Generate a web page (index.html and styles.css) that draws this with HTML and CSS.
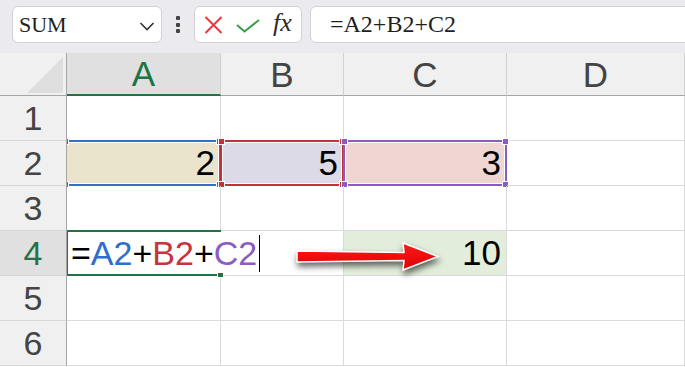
FILE: index.html
```html
<!DOCTYPE html>
<html>
<head>
<meta charset="utf-8">
<link rel="stylesheet" href="styles.css">
</head>
<body>
<div class="toolbar">
  <div class="namebox">
    <span class="name">SUM</span>
    <svg class="chev" width="16" height="10" viewBox="0 0 16 10"><path d="M1.5 2 L8 8.5 L14.5 2" fill="none" stroke="#333" stroke-width="1.6"/></svg>
  </div>
  <div class="grip"><i></i><i></i><i></i></div>
  <div class="fnbtns">
    <svg class="ico-x" width="19" height="18" viewBox="0 0 19 18"><path d="M1.5 1 L17.5 17 M17.5 1 L1.5 17" stroke="#e8383d" stroke-width="2" fill="none"/></svg>
    <svg class="ico-ok" width="24" height="14" viewBox="0 0 24 14"><path d="M1 6 L8.5 12.5 L23 1" stroke="#3a9e4a" stroke-width="2" fill="none"/></svg>
    <span class="fx">fx</span>
  </div>
  <div class="formula">=A2+B2+C2</div>
</div>
<div class="sheet">
  <div class="grid">
    <div class="hd corner"><div class="tri"></div></div>
    <div class="hd col active">A</div>
    <div class="hd col">B</div>
    <div class="hd col">C</div>
    <div class="hd col">D</div>

    <div class="rh">1</div>
    <div class="c"></div><div class="c"></div><div class="c"></div><div class="c"></div>

    <div class="rh">2</div>
    <div class="c v fill-a">2<span class="ref ref-blue"><b class="h tl"></b><b class="h tr"></b><b class="h bl"></b><b class="h br"></b></span></div>
    <div class="c v fill-b">5<span class="ref ref-red"><b class="h tl"></b><b class="h tr"></b><b class="h bl"></b><b class="h br"></b></span></div>
    <div class="c v fill-c">3<span class="ref ref-purple"><b class="h tl"></b><b class="h tr"></b><b class="h bl"></b><b class="h br"></b></span></div>
    <div class="c"></div>

    <div class="rh">3</div>
    <div class="c"></div><div class="c"></div><div class="c"></div><div class="c"></div>

    <div class="rh active">4</div>
    <div class="c edit"><span class="ftext">=<span class="t-blue">A2</span>+<span class="t-red">B2</span>+<span class="t-purple">C2</span><span class="caret"></span></span><span class="sel"><b class="handle"></b></span></div>
    <div class="c"></div>
    <div class="c v fill-g">10</div>
    <div class="c"></div>

    <div class="rh">5</div>
    <div class="c"></div><div class="c"></div><div class="c"></div><div class="c"></div>

    <div class="rh">6</div>
    <div class="c"></div><div class="c"></div><div class="c"></div><div class="c"></div>
  </div>
  <svg class="arrow" width="160" height="46" viewBox="0 0 160 46">
    <defs>
      <linearGradient id="rg" x1="0" y1="0" x2="0" y2="1">
        <stop offset="0" stop-color="#ff1a1a"/>
        <stop offset="1" stop-color="#e00000"/>
      </linearGradient>
    </defs>
    <polygon points="7,13 114,14.5 113,5 148,18.5 113,32 114,22.5 7,24" fill="url(#rg)" stroke="#ffffff" stroke-width="1.5" stroke-linejoin="miter"/>
  </svg>
</div>
</body>
</html>
```
FILE: styles.css
```css
* { box-sizing: border-box; }
html, body { margin: 0; padding: 0; background: #ffffff; }
body { font-family: "Liberation Sans", Arial, sans-serif; width: 685px; height: 367px; overflow: hidden; }

.toolbar {
  height: 53px;
  background: #ebebef;
  display: flex;
  align-items: flex-start;
  padding: 6px 0 0 12px;
}
.namebox {
  width: 150px;
  height: 37px;
  background: #fff;
  border: 1px solid #d2d2d6;
  border-radius: 6px;
  display: flex;
  align-items: center;
  justify-content: space-between;
  padding: 0 6px 0 6px;
}
.name {
  font-family: "Liberation Serif", "Times New Roman", serif;
  font-size: 22px;
  color: #1f1f1f;
  margin-top: 1px;
}
.chev { margin-top: 2px; }
.grip {
  width: 32px;
  height: 37px;
  display: flex;
  flex-direction: column;
  align-items: center;
  justify-content: center;
  gap: 2.5px;
}
.grip i {
  display: block;
  width: 4px;
  height: 4px;
  border-radius: 1px;
  background: #444;
}
.fnbtns {
  width: 108px;
  height: 37px;
  background: #fff;
  border: 1px solid #d2d2d6;
  border-radius: 6px;
  display: flex;
  align-items: center;
  padding-left: 9px;
}
.ico-x { margin-top: 1px; }
.ico-ok { margin-left: 13px; margin-top: 2px; }
.fx {
  font-family: "Liberation Serif", "Times New Roman", serif;
  font-style: italic;
  font-size: 26px;
  color: #2b2b2b;
  margin-left: 13px;
  margin-top: -3px;
}
.formula {
  flex: 1;
  height: 37px;
  margin-left: 8px;
  margin-right: -12px;
  background: #fff;
  border: 1px solid #d2d2d6;
  border-radius: 6px;
  font-family: "Liberation Serif", "Times New Roman", serif;
  font-size: 24px;
  color: #1f1f1f;
  padding-left: 19px;
  line-height: 35px;
}

.sheet { position: relative; }
.grid {
  display: grid;
  grid-template-columns: 67px 154px 123px 163px 178px;
  grid-template-rows: 43px repeat(6, 45px);
}
.hd {
  background: #f0f0f0;
  border-right: 1px solid #d0d0d0;
  border-bottom: 1px solid #a6a6a6;
  display: flex;
  align-items: center;
  justify-content: center;
  font-size: 35px;
  color: #444;
}
.corner {
  position: relative;
  border-right: 1px solid #a6a6a6;
}
.tri {
  position: absolute;
  right: 3px;
  bottom: 2px;
  width: 36px;
  height: 36px;
  background: #dedede;
  clip-path: polygon(100% 0, 100% 100%, 0 100%);
}
.hd.active {
  background: #e0e0e0;
  color: #217346;
  border-bottom: 2px solid #217346;
}
.col { padding-top: 1px; }
.rh {
  background: #f0f0f0;
  border-right: 1px solid #a6a6a6;
  border-bottom: 1px solid #d6d6d6;
  display: flex;
  align-items: center;
  justify-content: center;
  font-size: 34px;
  color: #444;
  position: relative;
  z-index: 3;
}
.rh.active { background: #e0e0e0; color: #217346; }
.c {
  border-right: 1px solid #dadada;
  border-bottom: 1px solid #dadada;
  position: relative;
}
.v {
  display: flex;
  align-items: center;
  justify-content: flex-end;
  padding-right: 5px;
  font-size: 35px;
  color: #000;
}
.fill-a { background: #ebe4cd; }
.fill-b { background: #dcdae6; }
.fill-c { background: #f0d6d3; }
.fill-g { background: #e2eedb; }

.ref {
  position: absolute;
  left: -1px; top: -1px; right: -1px; bottom: -1px;
  border: 2px solid;
  box-shadow: inset 0 0 0 1px #fff;
}
.ref-blue { border-color: #3470c8; left: -3px; }
.ref-red { border-color: #c3323b; }
.ref-purple { border-color: #8a5cc0; }
.h {
  position: absolute;
  width: 7px; height: 7px;
  border: 1px solid #fff;
}
.ref-blue .h { background: #3470c8; }
.ref-red .h { background: #c3323b; }
.ref-purple .h { background: #8a5cc0; }
.h.tl { left: -4px; top: -4px; }
.h.tr { right: -4px; top: -4px; }
.h.bl { left: -4px; bottom: -4px; }
.h.br { right: -4px; bottom: -4px; }

.edit {
  border-right-color: transparent;
  z-index: 2;
}
.ftext {
  position: absolute;
  left: 4px;
  top: 0;
  height: 44px;
  display: flex;
  align-items: center;
  white-space: nowrap;
  font-size: 34px;
  color: #000;
}
.t-blue { color: #2f6ecb; }
.t-red { color: #c6343c; }
.t-purple { color: #8b5cc2; }
.caret {
  display: inline-block;
  width: 1px;
  height: 37px;
  background: #000;
  margin-left: 2px;
}
.sel {
  position: absolute;
  left: -1px; top: -1px; right: -1px; bottom: -1px;
  border: 2px solid #217346;
  border-right: none;
}
.handle {
  position: absolute;
  right: -3px;
  bottom: -4px;
  width: 7px;
  height: 6px;
  background: #217346;
  border: 1px solid #fff;
}

.arrow {
  position: absolute;
  left: 290px;
  top: 185px;
  filter: drop-shadow(1px 4px 3px rgba(0,0,0,0.6));
  z-index: 5;
}
```
